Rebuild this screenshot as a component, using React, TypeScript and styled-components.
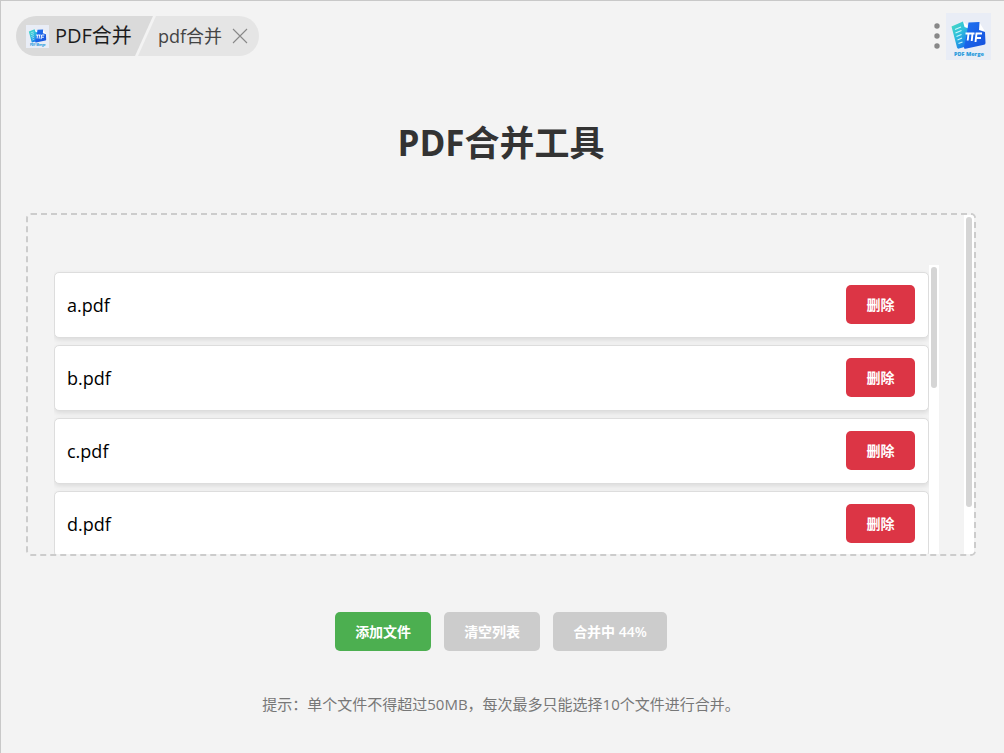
import React from "react";
import styled, { createGlobalStyle } from "styled-components";

const GlobalStyle = createGlobalStyle`
  *, *::before, *::after { box-sizing: border-box; }
  body {
    margin: 0;
    background: #f3f3f3;
    font-family: "Open Sans", "Noto Sans CJK SC", sans-serif;
  }
`;

const Page = styled.div`
  min-height: 100vh;
  border-top: 1px solid #c8c8c8;
  border-left: 1px solid #c8c8c8;
  background: #f3f3f3;
`;

const Header = styled.header`
  display: flex;
  justify-content: space-between;
  align-items: flex-start;
  padding: 12px 13px 0 15px;
`;

const Tabs = styled.nav`
  display: flex;
  height: 40px;
  margin-top: 3px;
  border-radius: 20px;
  overflow: hidden;
`;

const AppTab = styled.a`
  display: flex;
  align-items: center;
  gap: 6px;
  width: 137px;
  padding-left: 10px;
  background: #dadada;
  clip-path: polygon(0 0, 100% 0, calc(100% - 18px) 100%, 0 100%);
  color: #1c1c1c;
  font-size: 20px;
  line-height: 42px;
  text-decoration: none;
  white-space: nowrap;
`;

const FeatureTab = styled.div`
  display: flex;
  align-items: center;
  gap: 10px;
  margin-left: -15px;
  padding: 0 11px 0 20px;
  background: #e5e5e5;
  clip-path: polygon(18px 0, 100% 0, 100% 100%, 0 100%);
  color: #444;
  font-size: 18px;
  line-height: 42px;
  white-space: nowrap;
`;

const IconButton = styled.button`
  display: flex;
  padding: 0;
  border: 0;
  background: none;
  cursor: pointer;
`;

const HeaderRight = styled.div`
  display: flex;
  align-items: center;
  gap: 6px;
`;

const Main = styled.main`
  display: flex;
  flex-direction: column;
  align-items: center;
  padding: 0 28px 24px 25px;
`;

const Title = styled.h1`
  margin: 57px 0 45px;
  color: #333;
  font-size: 35px;
  line-height: 51px;
  font-weight: 700;
`;

const DropZone = styled.section`
  display: flex;
  width: 100%;
  height: 343px;
  border: 2px dashed #ccc;
  border-radius: 5px;
  overflow: hidden;
`;

const ZoneContent = styled.div`
  flex: 1;
  display: flex;
  align-items: flex-start;
  min-width: 0;
  padding: 50px 25px 0 26px;
`;

const FileList = styled.ul`
  flex: 1;
  display: flex;
  flex-direction: column;
  gap: 7px;
  height: 400px;
  margin: 0;
  padding: 7px 0 0;
  overflow: hidden;
  list-style: none;
`;

const FileRow = styled.li`
  display: flex;
  justify-content: space-between;
  align-items: center;
  flex: none;
  padding: 12px 13px 13px 12px;
  border: 1px solid #ddd;
  border-radius: 5px;
  background: #fff;
  box-shadow: 0 2px 5px rgba(0, 0, 0, 0.1);
  color: #000;
  font-size: 18px;
  line-height: 24px;
`;

const Track = styled.div<{ $height: string }>`
  flex: none;
  width: 10px;
  height: ${(p) => p.$height};
  padding: 2px;
  background: #fff;
`;

const Thumb = styled.div<{ $size: number }>`
  height: ${(p) => p.$size}px;
  border-radius: 3px;
  background: #d5d5d5;
`;

const tones = { danger: "#dc3545", primary: "#4caf50", muted: "#ccc" };

const Button = styled.button<{ $tone: keyof typeof tones }>`
  min-width: 69px;
  height: 39px;
  padding: 0 20px;
  border: 0;
  border-radius: 5px;
  background: ${(p) => tones[p.$tone]};
  color: #fff;
  font-family: inherit;
  font-size: 14px;
  line-height: 20px;
  font-weight: 600;
  white-space: nowrap;
  cursor: ${(p) => (p.$tone === "muted" ? "not-allowed" : "pointer")};
`;

const Actions = styled.div`
  display: flex;
  gap: 13px;
  margin-top: 56px;
`;

const Hint = styled.p`
  margin: 42px 0 0;
  color: #777;
  font-size: 15px;
  line-height: 22px;
`;

function Logo({ width, height }: { width: number; height: number }) {
  return (
    <svg
      width={width}
      height={height}
      viewBox="0 0 45 47"
      preserveAspectRatio="none"
      role="img"
      aria-label="PDF Merge"
    >
      <defs>
        <linearGradient id="leftPage" x1="0" y1="0" x2="0.700" y2="1">
          <stop offset="0" stopColor="#49dcc0" />
          <stop offset="0.5" stopColor="#2fbfdc" />
          <stop offset="1" stopColor="#1672ec" />
        </linearGradient>
        <linearGradient id="rightPage" x1="0" y1="0" x2="1" y2="1">
          <stop offset="0" stopColor="#1f74f2" />
          <stop offset="1" stopColor="#1650dc" />
        </linearGradient>
      </defs>
      <rect width="45" height="47" fill="#e9edf6" />
      <path d="M17 8.500l5.500 5v6l-5-3z" fill="#fff" />
      <path
        d="M5.500 13.500l11.500-5 1.500 5.500 4 1.500 1 17-10.500 3q-1.500 .5-2-1z"
        fill="url(#leftPage)"
      />
      <path d="M33.500 9.500l5.500 9-6-1.500z" fill="#fff" />
      <path
        d="M22.500 9.500l11-.5-.5 8 6 2 .5 11q0 1.500-1.500 1.800l-18.500 4q-1.800 .2-1.500-1.500l2.500-12z"
        fill="url(#rightPage)"
      />
      <path
        d="M9 16.500l6-2.500M9.500 20l6-2.500M10.500 23.500l5-2M11.500 27l4.500-2M12.500 30.500l4-1.500"
        stroke="#c9f5fb"
        strokeWidth="1.200"
      />
      <path
        d="M19.500 20.500h9M22.500 20.500l-.8 7M26.500 20.500l-.8 7.500M29.500 29l1-8.500h5.500M30.500 25h4.500"
        fill="none"
        stroke="#fff"
        strokeWidth="1.900"
      />
      <text
        x="8"
        y="42.500"
        fill="#2b9bdc"
        fontFamily="Open Sans, sans-serif"
        fontSize="5.500"
        fontWeight="800"
      >
        PDF Merge
      </text>
    </svg>
  );
}

const files = ["a.pdf", "b.pdf", "c.pdf", "d.pdf"];

export default function App() {
  return (
    <>
      <GlobalStyle />
      <Page>
        <Header>
          <Tabs>
            <AppTab href="#">
              <Logo width={23} height={23} />
              PDF合并
            </AppTab>
            <FeatureTab>
              pdf合并
              <IconButton type="button" aria-label="关闭">
                <svg width="16" height="16" viewBox="0 0 16 16">
                  <path d="M1 1l14 14M15 1L1 15" stroke="#888" strokeWidth="1.100" />
                </svg>
              </IconButton>
            </FeatureTab>
          </Tabs>
          <HeaderRight>
            <IconButton type="button" aria-label="更多">
              <svg width="6" height="28" viewBox="0 0 6 28" fill="#888">
                <circle cx="3" cy="3" r="2.700" />
                <circle cx="3" cy="13" r="2.700" />
                <circle cx="3" cy="23" r="2.700" />
              </svg>
            </IconButton>
            <Logo width={45} height={47} />
          </HeaderRight>
        </Header>
        <Main>
          <Title>PDF合并工具</Title>
          <DropZone>
            <ZoneContent>
              <FileList>
                {files.map((name) => (
                  <FileRow key={name}>
                    <span>{name}</span>
                    <Button type="button" $tone="danger">
                      删除
                    </Button>
                  </FileRow>
                ))}
              </FileList>
              <Track $height="400px" aria-hidden="true">
                <Thumb $size={121} />
              </Track>
            </ZoneContent>
            <Track $height="100%" aria-hidden="true">
              <Thumb $size={290} />
            </Track>
          </DropZone>
          <Actions>
            <Button type="button" $tone="primary">
              添加文件
            </Button>
            <Button type="button" $tone="muted" disabled>
              清空列表
            </Button>
            <Button type="button" $tone="muted" disabled>
              合并中 44%
            </Button>
          </Actions>
          <Hint>提示：单个文件不得超过50MB，每次最多只能选择10个文件进行合并。</Hint>
        </Main>
      </Page>
    </>
  );
}
